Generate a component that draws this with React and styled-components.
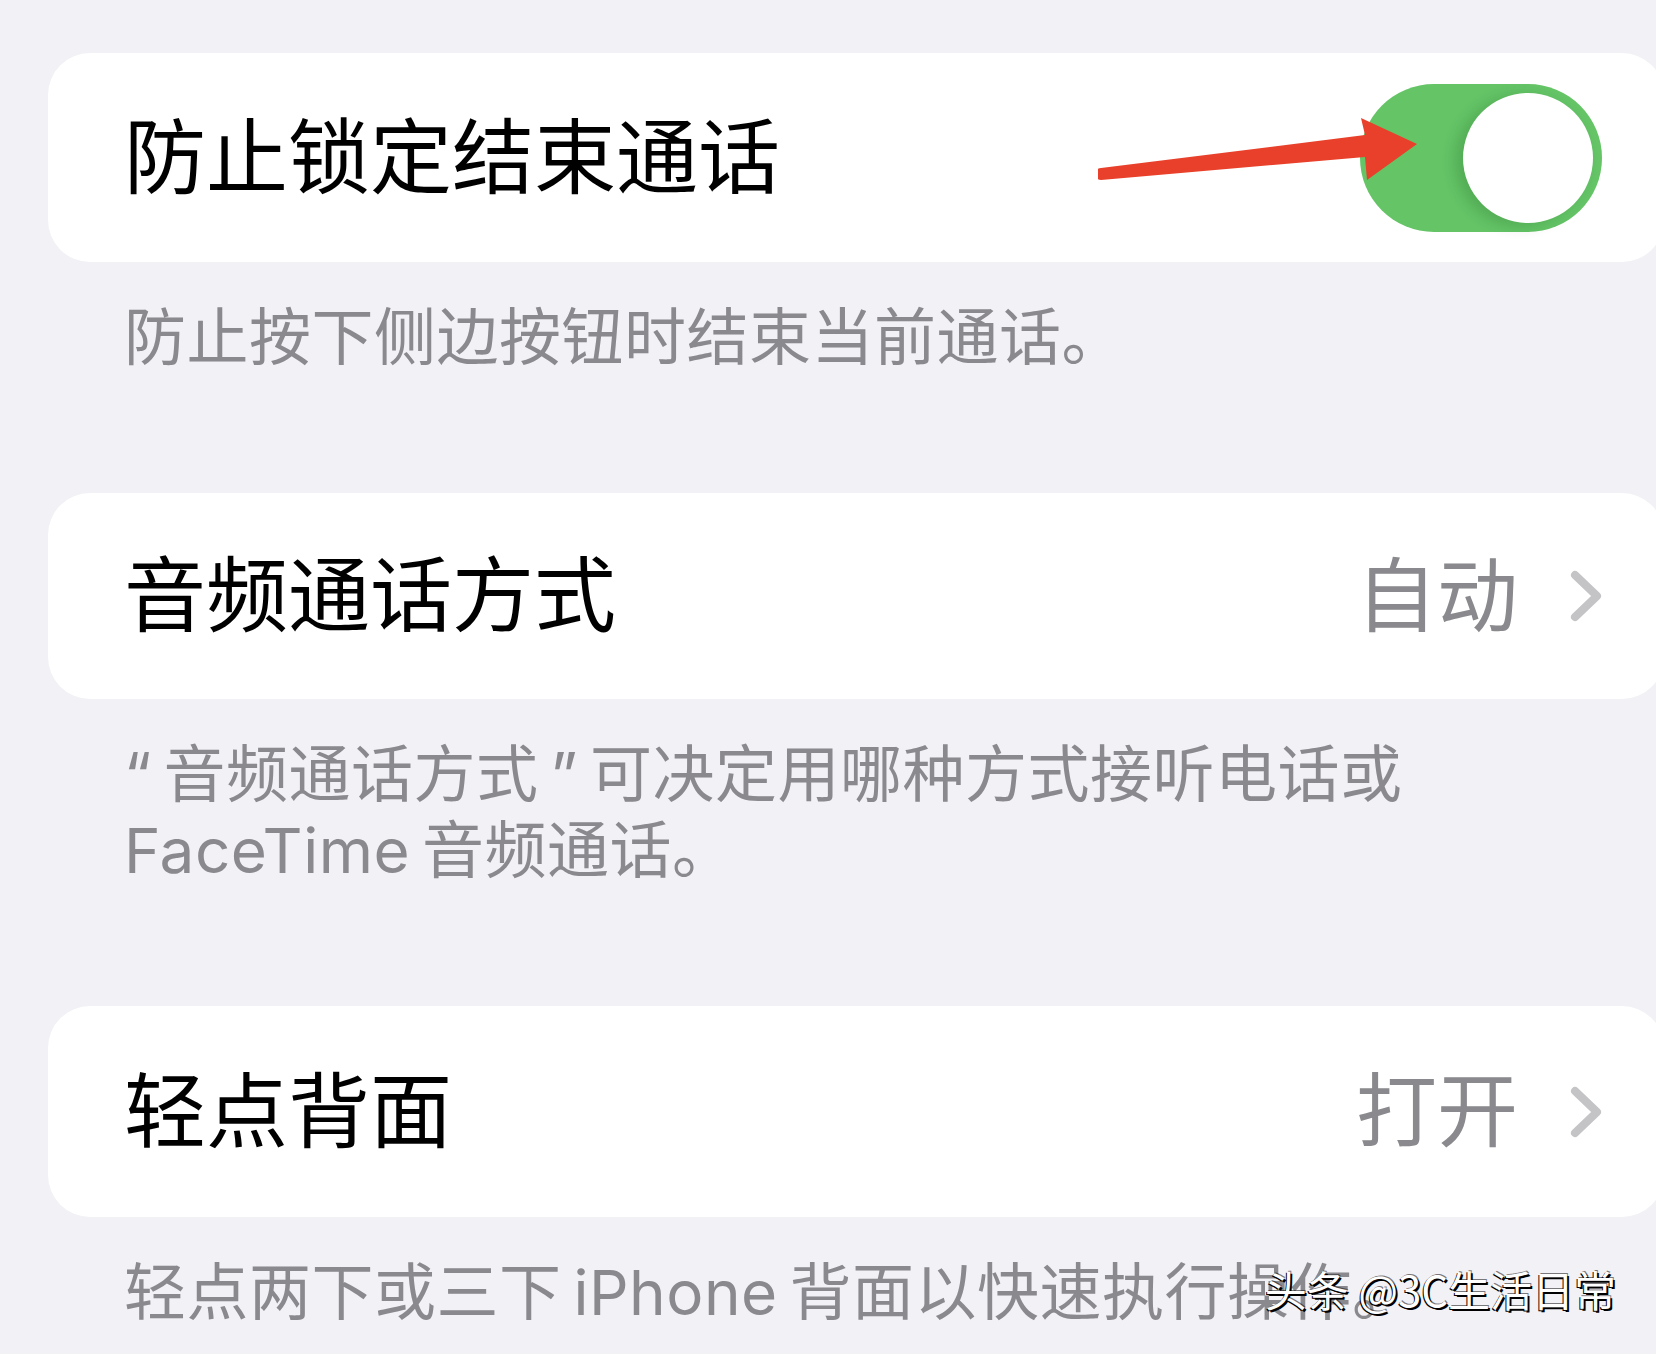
import React from 'react';
import styled, { createGlobalStyle } from 'styled-components';

const GlobalStyle = createGlobalStyle`
  html, body {
    margin: 0;
    padding: 0;
    background: #f1f1f6;
  }
  body {
    font-family: "Inter", "Noto Sans CJK SC", sans-serif;
  }
`;

const Page = styled.div`
  position: relative;
  min-height: 100vh;
  overflow: hidden;
  padding: 53px 0 0 48px;
  box-sizing: border-box;
  display: flex;
  flex-direction: column;
  gap: 117px;
`;

const Section = styled.section`
  display: flex;
  flex-direction: column;
`;

const Card = styled.div`
  position: relative;
  height: ${(p) => p.$height || 208}px;
  margin-right: -8px;
  background: #ffffff;
  border-radius: 42px;
  display: flex;
  align-items: center;
  padding: 0 62px 0 76px;
`;

const Title = styled.div`
  flex: 1;
  font-size: 82px;
  font-weight: 400;
  color: #000;
  line-height: 1;
`;

const Value = styled.div`
  font-size: 81px;
  color: #8a8a8e;
  line-height: 1;
`;

const Chevron = styled.svg`
  width: 32px;
  height: 52px;
  margin-left: 52px;
  flex-shrink: 0;
`;

const Toggle = styled.div`
  width: 242px;
  height: 148px;
  border-radius: 74px;
  background: ${(p) => (p.$on ? '#64c466' : '#e9e9eb')};
  display: flex;
  align-items: center;
  justify-content: ${(p) => (p.$on ? 'flex-end' : 'flex-start')};
  padding: 0 9px;
  box-sizing: border-box;
`;

const Knob = styled.div`
  width: 130px;
  height: 130px;
  border-radius: 50%;
  background: #ffffff;
  box-shadow: -8px 3px 14px rgba(0, 60, 0, 0.18);
`;

const Arrow = styled.svg`
  position: absolute;
  left: 1050px;
  top: 62px;
  width: 321px;
  height: 68px;
`;

const Footer = styled.p`
  margin: 0;
  padding: 38px 140px 0 76px;
  font-size: 62px;
  line-height: 76px;
  letter-spacing: 0.5px;
  word-spacing: -6px;
  color: #8a8a8e;
`;

const Watermark = styled.div`
  position: absolute;
  top: 1268px;
  right: 40px;
  font-family: "Noto Sans CJK SC", sans-serif;
  font-size: 42px;
  line-height: 1;
  color: #ffffff;
  text-shadow: 2px 2px 0 #000, -1px 1px 0 #000, 1px -1px 0 rgba(0, 0, 0, 0.5);
`;

function ChevronIcon() {
  return (
    <Chevron viewBox="0 0 32 52">
      <path d="M5 5 L27 26 L5 47" fill="none" stroke="#c4c4c7" strokeWidth="8" strokeLinecap="round" strokeLinejoin="round" />
    </Chevron>
  );
}

function RedArrow() {
  return (
    <Arrow viewBox="0 0 321 68">
      <path
        d="M3 53 L267 20 L263 3 L319 29 L269 65 L267 42 L3 65 A6 6 0 0 1 3 53 Z"
        fill="#e8402a"
      />
    </Arrow>
  );
}

export default function App() {
  return (
    <>
      <GlobalStyle />
      <Page>
        <Section>
          <Card $height={209}>
            <Title>防止锁定结束通话</Title>
            <Toggle $on>
              <Knob />
            </Toggle>
            <RedArrow />
          </Card>
          <Footer>防止按下侧边按钮时结束当前通话。</Footer>
        </Section>

        <Section>
          <Card $height={206}>
            <Title>音频通话方式</Title>
            <Value>自动</Value>
            <ChevronIcon />
          </Card>
          <Footer>{'“\u2009音频通话方式\u2009”\u2009可决定用哪种方式接听电话或 FaceTime 音频通话。'}</Footer>
        </Section>

        <Section>
          <Card $height={211}>
            <Title>轻点背面</Title>
            <Value>打开</Value>
            <ChevronIcon />
          </Card>
          <Footer>轻点两下或三下 iPhone 背面以快速执行操作。</Footer>
        </Section>

        <Watermark>头条 @3C生活日常</Watermark>
      </Page>
    </>
  );
}
